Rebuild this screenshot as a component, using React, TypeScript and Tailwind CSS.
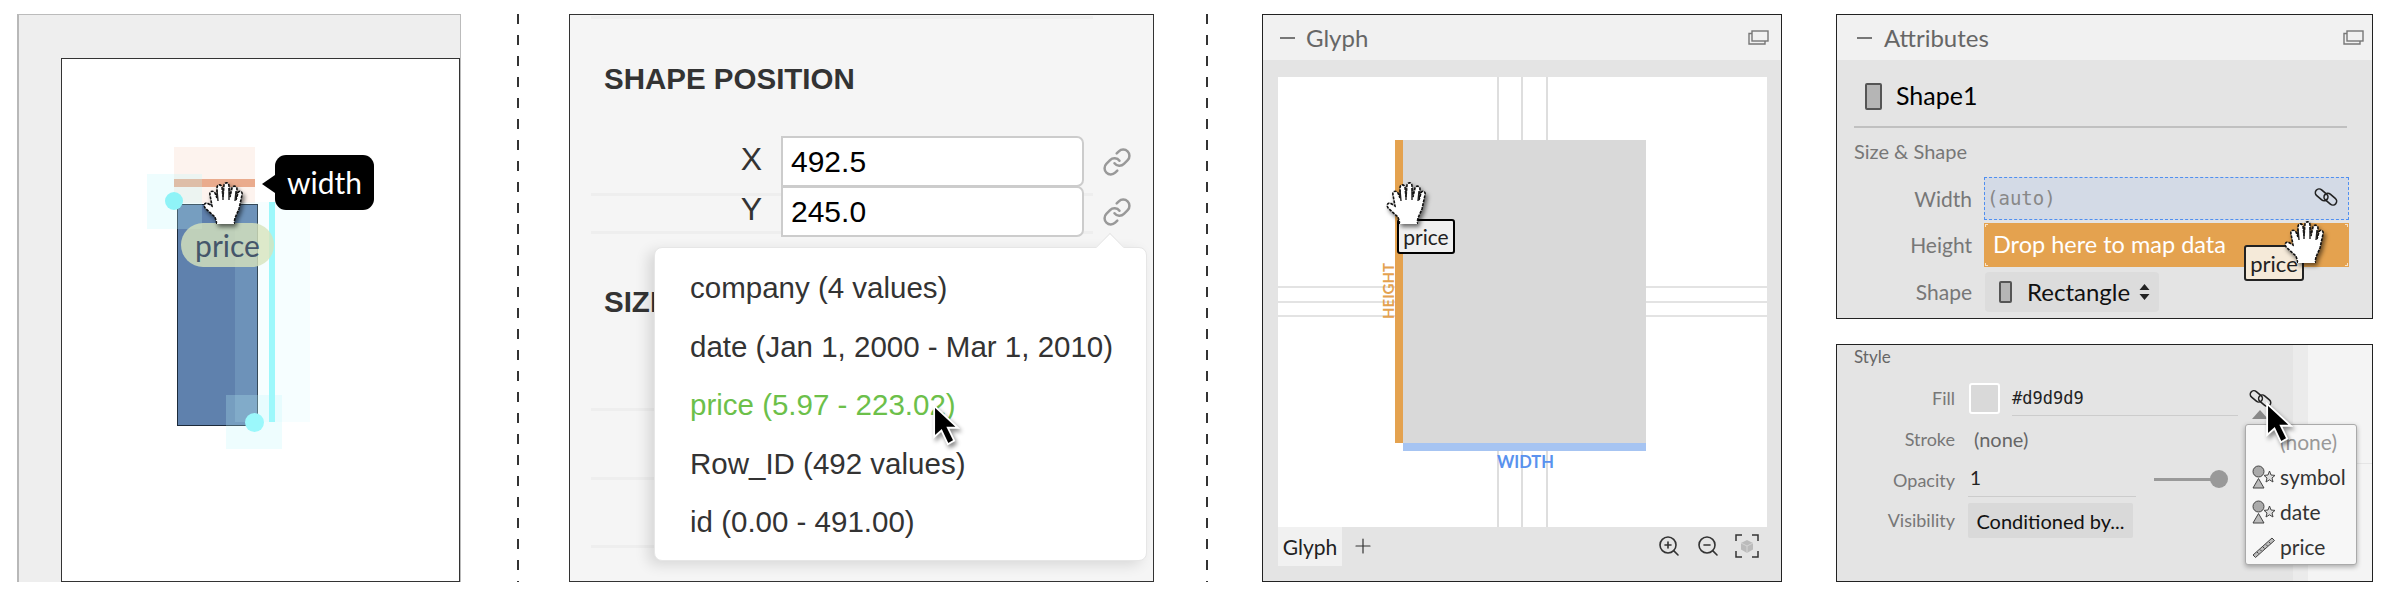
import { Link, ZoomIn, ZoomOut, Plus } from "lucide-react";

function Hand({ className }: { className: string }) {
    return (
        <svg viewBox="0 0 41 42" className={`absolute w-[41px] h-[42px] drop-shadow-[2px_3px_2px_rgba(0,0,0,0.55)] ${className}`}>
            <path
                d="M14 42 L12 35 L3 27 C0 24 1 21 4 21 L9 24 L7 13 C6 9 10 8 12 11 L14 16 L14 6 C14 2 18 2 19 5 L20 15 L21 3 C22 0 26 0 26 4 L27 15 L29 6 C30 3 34 4 34 7 L33 18 L35 11 C36 8 40 9 39 13 L36 27 L32 36 L31 42 Z"
                fill="#fff"
                stroke="#111"
                strokeWidth="1.6"
                strokeDasharray="3 1"
            />
            <path d="M14 8 L15 19 M20 6 L20 18 M26 6 L26 18 M33 9 L32 19" stroke="#222" strokeWidth="1.4" fill="none" />
            <path d="M14 42 L31 42" stroke="#fff" strokeWidth="3" />
        </svg>
    );
}

function Arrow({ className }: { className: string }) {
    return (
        <svg viewBox="0 0 30 46" className={`absolute drop-shadow-[2px_3px_2px_rgba(0,0,0,0.45)] ${className}`}>
            <path d="M2 2 L2 36 L10 29 L17 44 L24 40 L17 26 L28 26 Z" fill="#000" stroke="#fff" strokeWidth="2" />
        </svg>
    );
}

function Chain({ className }: { className: string }) {
    return (
        <svg viewBox="0 0 24 20" className={className} fill="none" stroke="#222" strokeWidth="1.5">
            <rect x="1.5" y="4.5" width="13" height="7" rx="3.5" transform="rotate(40 8 8)" />
            <rect x="9.5" y="8.5" width="13" height="7" rx="3.5" transform="rotate(40 16 12)" />
        </svg>
    );
}

function WindowIcon() {
    return (
        <svg viewBox="0 0 21 15" className="w-[21px] h-[15px]" fill="none" stroke="#777" strokeWidth="1.4">
            <rect x="4" y="1" width="16" height="10" />
            <path d="M4 3.5 H1 V14 H17 V11" />
        </svg>
    );
}

function SymbolIcon() {
    return (
        <svg viewBox="0 0 24 24" className="w-[24px] h-[26px] shrink-0" fill="#ddd" stroke="#444" strokeWidth="1">
            <circle cx="6.5" cy="6.5" r="5.5" fill="#aaa" />
            <path d="M6.5 13.5 L12 23 H1 Z" fill="#bbb" />
            <path d="M17.5 6 L19 10 L23 10.4 L20 13 L21 17 L17.5 14.8 L14 17 L15 13 L12 10.4 L16 10 Z" />
        </svg>
    );
}

function RulerIcon() {
    return (
        <svg viewBox="0 0 24 24" className="w-[24px] h-[26px] shrink-0" fill="none" stroke="#444" strokeWidth="1">
            <path d="M1 20 L20 3 L22.5 5.500 L3.500 22.500 Z" fill="#bbb" />
            <path d="M5 17 L6.500 18.500 M8 14.500 L9.500 16 M11 12 L12.500 13.500 M14 9.500 L15.500 11 M17 7 L18.500 8.500" />
        </svg>
    );
}

function FitIcon() {
    return (
        <svg viewBox="0 0 24 24" className="w-[24px] h-[24px]" fill="none">
            <path d="M1 7 V1 H7 M17 1 H23 V7 M23 17 V23 H17 M7 23 H1 V17" stroke="#333" strokeWidth="1.5" />
            <path d="M12 6 L18 9 V15.500 L12 19 L6 15.500 V9 Z" fill="#bbb" />
            <path d="M6 9 L12 12 L18 9 M12 12 V19" stroke="#d5d5d5" strokeWidth="1" />
        </svg>
    );
}

function UpDown() {
    return (
        <svg viewBox="0 0 11 18" className="ml-[9px] w-[11px] h-[18px]" fill="#222">
            <path d="M5.500 1 L10.500 7 H0.500 Z M5.500 17 L10.500 11 H0.500 Z" />
        </svg>
    );
}

function CanvasPanel() {
    return (
        <div className="w-[444px] h-[568px] shrink-0 bg-[#eeeeee] border-t border-t-[#bbb] border-l-2 border-l-[#b8b8b8] border-r border-r-[#bbb] pt-[43px] pl-[42px]">
            <div className="relative w-full h-full bg-white border border-[#333] font-['Lato',sans-serif]">
                <div className="absolute left-[112px] top-[88px] w-[81px] h-[56px] bg-[#fdf3ee]" />
                <div className="absolute left-[112px] top-[120px] w-[81px] h-[8px] bg-[#eaab8d]" />
                <div className="absolute left-[115px] top-[145px] w-[81px] h-[222px] bg-[#5f81ad] border border-[#1c2a3a]" />
                <div className="absolute left-[85px] top-[115px] w-[55px] h-[55px] bg-[#baf7fa]/25" />
                <div className="absolute left-[164px] top-[336px] w-[56px] h-[54px] bg-[#baf7fa]/25" />
                <div className="absolute left-[173px] top-[143px] w-[75px] h-[220px] bg-[#c5fbfd]/15" />
                <div className="absolute left-[207px] top-[143px] w-[6px] h-[220px] bg-[#9df8fb]" />
                <div className="absolute left-[103px] top-[133px] w-[18px] h-[18px] rounded-full bg-[#8ff3f7]" />
                <div className="absolute left-[183px] top-[354px] w-[19px] h-[19px] rounded-full bg-[#9bf8fb]" />
                <div className="absolute left-[119px] top-[164px] w-[93px] h-[44px] rounded-[22px] bg-[#d7e3bd]/80 flex items-center justify-center text-[30px] text-[#45566a]">price</div>
                <div className="absolute left-[213px] top-[96px] w-[99px] h-[55px] rounded-[11px] bg-black flex items-center justify-center text-[30px] text-white">width</div>
                <div className="absolute left-[200px] top-[116px] w-0 h-0 border-y-[9px] border-y-transparent border-r-[13px] border-r-black" />
                <Hand className="left-[141px] top-[123px]" />
            </div>
        </div>
    );
}

function Divider() {
    return <div className="w-[2px] h-[568px] shrink-0 bg-[repeating-linear-gradient(to_bottom,#333_0,#333_10px,transparent_10px,transparent_21px)]" />;
}

function PositionPanel() {
    const items = ["company (4 values)", "date (Jan 1, 2000 - Mar 1, 2010)", "price (5.97 - 223.02)", "Row_ID (492 values)", "id (0.00 - 491.00)"];
    return (
        <div className="relative w-[585px] h-[568px] shrink-0 bg-[#f5f5f5] border border-[#333] pl-[21px] pt-[1px] font-['Liberation_Sans',sans-serif] text-[#333]">
            <div className="w-[502px] h-[3px] bg-[#eeeeee]" />
            <div className="w-[502px] h-[177px] border-b-[3px] border-[#eeeeee]">
                <div className="pt-[43px] pl-[13px] text-[29.500px] leading-[34px] font-bold">SHAPE POSITION</div>
                <div className="flex items-center mt-[39px]">
                    <div className="w-[172px] shrink-0 pr-[1px] pb-[5px] text-right text-[32px]">X</div>
                    <div className="ml-[18px] w-[303px] h-[51px] shrink-0 bg-white border-2 border-[#ccc] rounded-r-[7px] flex items-center pl-[8px] text-[30px] text-black">492.5</div>
                    <Link className="ml-[18px] w-[30px] h-[30px] shrink-0 text-[#999]" strokeWidth={2} />
                </div>
            </div>
            <div className="w-[502px] h-[49px] border-b-[3px] border-[#eeeeee]">
                <div className="flex items-center -mt-[11px]">
                    <div className="w-[172px] shrink-0 pr-[1px] pb-[5px] text-right text-[32px]">Y</div>
                    <div className="ml-[18px] w-[303px] h-[51px] shrink-0 bg-white border-2 border-[#ccc] rounded-r-[7px] flex items-center pl-[8px] text-[30px] text-black">245.0</div>
                    <Link className="ml-[18px] w-[30px] h-[30px] shrink-0 text-[#999]" strokeWidth={2} />
                </div>
            </div>
            <div className="w-[502px] h-[177px] border-b-[3px] border-[#eeeeee] pt-[51px] pl-[13px] text-[29.500px] leading-[34px] font-bold">SIZE</div>
            <div className="w-[502px] h-[69px] border-b-[3px] border-[#eeeeee]" />
            <div className="w-[502px] h-[68px] border-b-[3px] border-[#eeeeee]" />

            <div className="absolute left-[84px] top-[232px] w-[493px] h-[314px] bg-white rounded-[8px] border border-[#e6e6e6] shadow-[-6px_4px_14px_rgba(0,0,0,0.12)] pt-[11px] pl-[35px] text-[29.500px]">
                {items.map((item) => (
                    <div key={item} className={`h-[58.500px] leading-[58px] whitespace-nowrap ${item.startsWith("price") ? "text-[#6cc04a]" : ""}`}>{item}</div>
                ))}
            </div>
            <div className="absolute left-[530px] top-[222px] w-[20px] h-[20px] bg-white rotate-45 border-l border-t border-[#e6e6e6]" />
            <Arrow className="left-[362px] top-[389px] w-[28px] h-[42px]" />
        </div>
    );
}

function GlyphPanel() {
    return (
        <div className="w-[520px] h-[568px] shrink-0 bg-[#e4e4e4] border border-[#222] font-['Lato',sans-serif] flex flex-col">
            <div className="h-[45px] shrink-0 bg-[#f1f1f1] flex items-center pl-[17px] pr-[12px] text-[24px] text-[#666]">
                <div className="w-[15px] h-[2px] bg-[#777]" />
                <span className="ml-[11px] flex-1">Glyph</span>
                <WindowIcon />
            </div>
            <div className="px-[15px] pt-[17px]">
                <div className="relative w-[489px] h-[450px] bg-white overflow-hidden">
                    <div className="absolute left-[219px] top-0 w-[2px] h-full bg-[#dedede]" />
                    <div className="absolute left-[243px] top-0 w-[2px] h-full bg-[#dedede]" />
                    <div className="absolute left-[268px] top-0 w-[2px] h-full bg-[#dedede]" />
                    <div className="absolute left-0 top-[209px] w-full h-[2px] bg-[#e3e3e3]" />
                    <div className="absolute left-0 top-[224px] w-full h-[2px] bg-[#e3e3e3]" />
                    <div className="absolute left-0 top-[238px] w-full h-[2px] bg-[#e3e3e3]" />
                    <div className="absolute left-[125px] top-[63px] w-[243px] h-[303px] bg-[#d9d9d9]" />
                    <div className="absolute left-[117px] top-[63px] w-[8px] h-[303px] bg-[#e4a24f]" />
                    <div className="absolute left-[125px] top-[366px] w-[243px] h-[8px] bg-[#a6c4f2]" />
                    <div className="absolute left-[219px] top-[375px] text-[16.500px] leading-[20px] font-bold text-[#5a92ee]">WIDTH</div>
                    <div className="absolute left-[78px] top-[206px] w-[64px] text-center -rotate-90 text-[15px] leading-[16px] font-bold text-[#e4a24f]">HEIGHT</div>
                    <div className="absolute left-[119px] top-[142px] w-[58px] h-[35px] bg-[#f0f0f0] border-2 border-black rounded-[3px] flex items-center justify-center text-[21px] text-[#222]">price</div>
                    <Hand className="left-[108px] top-[105px]" />
                </div>
                <div className="flex items-start h-[39px]">
                    <div className="w-[64px] h-[39px] bg-[#f1f1f1] flex items-center justify-center text-[21px] text-[#222]">Glyph</div>
                    <Plus className="ml-[9px] mt-[7px] w-[24px] h-[24px] text-[#333]" strokeWidth={1.2} />
                    <div className="ml-auto mr-[7px] mt-[7px] flex items-center gap-[15px]">
                        <ZoomIn className="w-[24px] h-[24px] text-[#333]" strokeWidth={1.6} />
                        <ZoomOut className="w-[24px] h-[24px] text-[#333]" strokeWidth={1.6} />
                        <FitIcon />
                    </div>
                </div>
            </div>
        </div>
    );
}

function RectIcon({ size }: { size: string }) {
    return <div className={`${size} shrink-0 bg-[#b5b5b5] border-2 border-[#555] rounded-[2px]`} />;
}

function AttributesPanel() {
    return (
        <div className="w-[537px] h-[305px] bg-[#e4e4e4] border border-[#222] font-['Lato',sans-serif]">
            <div className="h-[45px] bg-[#f1f1f1] flex items-center pl-[20px] pr-[8px] text-[24px] text-[#666]">
                <div className="w-[15px] h-[2px] bg-[#777]" />
                <span className="ml-[12px] flex-1">Attributes</span>
                <WindowIcon />
            </div>
            <div className="mx-[17px] h-[68px] w-[493px] border-b-2 border-[#c0c0c0] flex items-center pl-[11px] pt-[6px]">
                <RectIcon size="w-[17px] h-[27px]" />
                <span className="ml-[14px] text-[25px] text-black">Shape1</span>
            </div>
            <div className="ml-[17px] mt-[11px] text-[20px] leading-[24px] text-[#777]">Size &amp; Shape</div>
            <div className="flex items-center mt-[14px] h-[43px]">
                <div className="w-[135px] text-right text-[21px] text-[#777]">Width</div>
                <div className="relative ml-[12px] w-[365px] h-[43px] bg-[#d3dae6] border-[1.5px] border-dashed border-[#4f8ff0] flex items-center pl-[2px] font-['DejaVu_Sans_Mono',monospace] text-[19px] text-[#888]">
                    <span className="whitespace-nowrap">(auto)</span>
                    <Chain className="absolute right-[9px] top-[8px] w-[26px] h-[22px]" />
                </div>
            </div>
            <div className="flex items-center mt-[3px] h-[44px]">
                <div className="w-[135px] text-right text-[21px] text-[#777]">Height</div>
                <div className="relative ml-[12px] w-[365px] h-[44px] bg-[#e4a24f] flex items-center pl-[9px] text-[23.500px] text-white">
                    Drop here to map data
                    <div className="absolute left-[1px] top-[1px] w-[3px] h-[3px] border-l border-t border-white/70" />
                    <div className="absolute right-[1px] top-[1px] w-[3px] h-[3px] border-r border-t border-white/70" />
                    <div className="absolute left-[1px] bottom-[1px] w-[3px] h-[3px] border-l border-b border-white/70" />
                    <div className="absolute right-[1px] bottom-[1px] w-[3px] h-[3px] border-r border-b border-white/70" />
                    <div className="absolute left-[260px] top-[22px] w-[60px] h-[36px] bg-[#f5ead9] border-2 border-[#222] rounded-[3px] flex items-center justify-center text-[22px] text-[#222]">price</div>
                    <Hand className="left-[300px] top-[-2px]" />
                </div>
            </div>
            <div className="flex items-center mt-[5px] h-[40px]">
                <div className="w-[135px] text-right text-[21px] text-[#777]">Shape</div>
                <div className="ml-[13px] w-[174px] h-[40px] bg-[#dcdcdc] rounded-[4px] flex items-center pl-[14px] text-[24px] text-[#111]">
                    <RectIcon size="w-[13px] h-[22px]" />
                    <span className="ml-[15px]">Rectangle</span>
                    <UpDown />
                </div>
            </div>
        </div>
    );
}

function StylePanel() {
    const menu = [
        { icon: <SymbolIcon />, label: "symbol" },
        { icon: <SymbolIcon />, label: "date" },
        { icon: <RulerIcon />, label: "price" },
    ];
    return (
        <div className="relative w-[537px] h-[238px] bg-[#f4f4f4] border border-[#222] font-['Lato',sans-serif] flex text-[#777]">
            <div className="w-[456px] shrink-0 bg-[#e4e4e4]">
                <div className="pl-[17px] text-[17px] leading-[24px] text-[#666]">Style</div>
                <div className="flex items-center mt-[14px] h-[31px]">
                    <div className="w-[118px] text-right text-[18px]">Fill</div>
                    <div className="ml-[14px] w-[31px] h-[31px] bg-[#d9d9d9] border-2 border-white rounded-[3px]" />
                    <div className="ml-[12px] w-[226px] h-[33px] mt-[2px] border-b border-[#ccc] flex items-center font-['DejaVu_Sans_Mono',monospace] text-[17px] text-[#222]">#d9d9d9</div>
                    <Chain className="ml-[10px] w-[25px] h-[21px]" />
                </div>
                <div className="flex items-center mt-[10px] h-[30px]">
                    <div className="w-[118px] text-right text-[18px]">Stroke</div>
                    <div className="ml-[19px] text-[20px] text-[#666]">(none)</div>
                </div>
                <div className="flex items-center mt-[7px] h-[36px]">
                    <div className="w-[118px] text-right text-[18px] pt-[3px]">Opacity</div>
                    <div className="ml-[13px] w-[168px] h-[36px] border-b border-[#ccc] flex items-center pl-[2px] text-[19px] text-[#222]">1</div>
                    <div className="ml-[18px] w-[60px] h-[3px] bg-[#999]" />
                    <div className="w-[18px] h-[18px] -ml-[4px] rounded-full bg-[#999]" />
                </div>
                <div className="flex items-center mt-[6px] h-[35px]">
                    <div className="w-[118px] text-right text-[18px]">Visibility</div>
                    <div className="ml-[13px] w-[165px] h-[35px] bg-[#d9d9d9] rounded-[2px] flex items-center justify-center text-[20px] text-[#111]">Conditioned by...</div>
                </div>
            </div>
            <div className="w-[15px] shrink-0 bg-[#ebebeb]" />
            <div className="flex-1 h-[119px] border-b border-[#e5e5e5]" />

            <div className="absolute left-[415px] top-[65px] w-0 h-0 border-x-[8px] border-x-transparent border-b-[9px] border-b-[#888]" />
            <div className="absolute left-[408px] top-[79px] w-[112px] h-[141px] bg-[#f7f7f7] border border-[#aaa] rounded-[3px] shadow-[0_2px_5px_rgba(0,0,0,0.3)] text-[21px] text-[#333]">
                <div className="h-[34px] pl-[34px] flex items-center text-[#999]">(none)</div>
                {menu.map((m) => (
                    <div key={m.label} className="h-[35px] pl-[6px] flex items-center">
                        {m.icon}
                        <span className="ml-[4px]">{m.label}</span>
                    </div>
                ))}
            </div>
            <Arrow className="left-[428px] top-[57px] w-[28px] h-[42px]" />
        </div>
    );
}

export default function App() {
    return (
        <div className="w-[2394px] h-[600px] bg-white flex items-start pt-[14px] pl-[17px]">
            <CanvasPanel />
            <div className="ml-[56px]"><Divider /></div>
            <div className="ml-[50px]"><PositionPanel /></div>
            <div className="ml-[52px]"><Divider /></div>
            <div className="ml-[54px]"><GlyphPanel /></div>
            <div className="ml-[54px] flex flex-col gap-[25px]">
                <AttributesPanel />
                <StylePanel />
            </div>
        </div>
    );
}
